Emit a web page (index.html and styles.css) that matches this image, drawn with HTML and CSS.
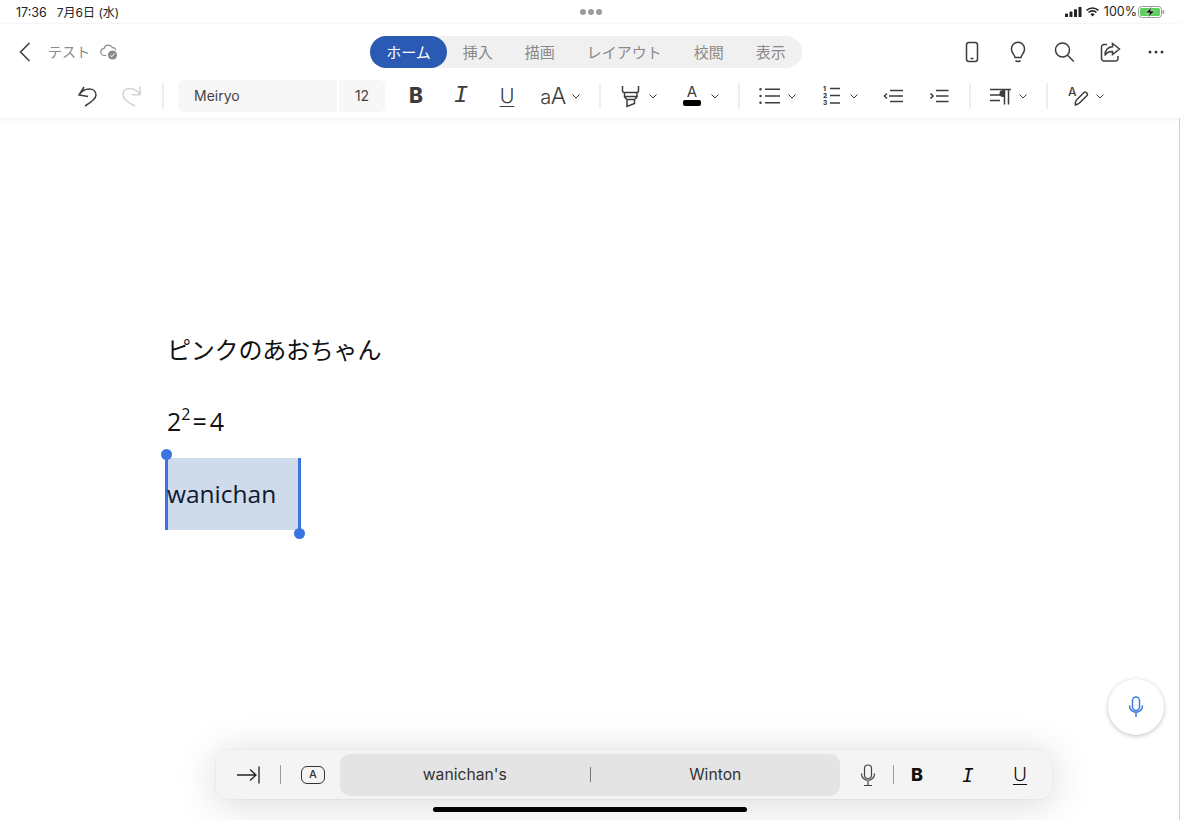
FILE: index.html
```html
<!DOCTYPE html>
<html lang="ja">
<head>
<meta charset="utf-8">
<title>テスト</title>
<link rel="stylesheet" href="styles.css">
</head>
<body>
<div class="screen">
  <div class="status">
    <div class="status-left"><span>17:36</span><span class="date">7月6日 (水)</span></div>
    <div class="status-dots"><i></i><i></i><i></i></div>
    <div class="status-right">
      <svg class="sig" width="17" height="10" viewBox="0 0 17 10"><rect x="0" y="6.500" width="3" height="3.500" rx=".6"/><rect x="4.500" y="4.500" width="3" height="5.500" rx=".6"/><rect x="9" y="2.200" width="3" height="7.800" rx=".6"/><rect x="13.500" y="0" width="3" height="10" rx=".6"/></svg>
      <svg class="wifi" width="13" height="10" viewBox="0 0 13 10"><path d="M.6 3.400a8.400 8.400 0 0 1 11.800 0M2.600 5.500a5.500 5.500 0 0 1 7.800 0" fill="none" stroke="#222" stroke-width="1.600"/><path d="M4.400 7.200a3 3 0 0 1 4.200 0L6.500 9.600z" fill="#222"/></svg>
      <span class="pct">100%</span>
      <svg class="batt" width="27" height="12" viewBox="0 0 27 12"><rect x=".5" y=".5" width="23" height="11" rx="3" fill="none" stroke="#9a9a9a"/><rect x="2" y="2" width="20" height="8" rx="1.600" fill="#5ed15c"/><rect x="24.600" y="4" width="1.600" height="4" rx=".8" fill="#9a9a9a"/><path d="M14 .8 7.500 7h4l-1.500 4.400L16.600 5h-4z" fill="#111" stroke="#fff" stroke-width=".5"/></svg>
    </div>
  </div>

  <header class="ribbon">
    <div class="title-row">
      <div class="doc-side">
        <svg class="back" width="12" height="20" viewBox="0 0 12 20"><path d="M10.500 1 1.500 10l9 9" fill="none" stroke="#3a3a3a" stroke-width="1.500"/></svg>
        <span class="doc-name">テスト</span>
        <svg class="cloud" width="19" height="18" viewBox="0 0 19 18"><path d="M6 12.500H4.400A3.400 3.400 0 0 1 4 5.700 4.400 4.400 0 0 1 12.300 4.600a3.200 3.200 0 0 1 3.400 2.600" fill="none" stroke="#8c8c8c" stroke-width="1.200"/><circle cx="12.500" cy="12" r="4.600" fill="#8c8c8c"/><path d="m10.400 12.400 1.500 1.300 2.700-3.200" fill="none" stroke="#fff" stroke-width="1"/></svg>
      </div>
      <nav class="tabs">
        <span class="tab active">ホーム</span>
        <span class="tab">挿入</span>
        <span class="tab">描画</span>
        <span class="tab">レイアウト</span>
        <span class="tab">校閲</span>
        <span class="tab">表示</span>
      </nav>
      <div class="actions">
        <svg class="ic" viewBox="0 0 24 24"><rect x="6.500" y="2.500" width="11" height="19" rx="2.500"/><path d="M10.500 18.500h3"/></svg>
        <svg class="ic" viewBox="0 0 24 24"><path d="M9 17.500c0-2.600-3.600-4.300-3.600-8.600a6.600 6.600 0 0 1 13.200 0c0 4.300-3.600 6-3.600 8.600zM9.500 20.500c1 1.300 4 1.300 5 0"/></svg>
        <svg class="ic" viewBox="0 0 24 24"><circle cx="10.500" cy="10" r="7"/><path d="m15.600 15.200 6.200 6.300"/></svg>
        <svg class="ic" viewBox="0 0 24 24"><path d="M9 4.500H6a2.500 2.500 0 0 0-2.500 2.500v11.500A2.500 2.500 0 0 0 6 21h11.500a2.500 2.500 0 0 0 2.500-2.500V16"/><path d="M14.500 3.500 21.500 9l-7 5.500V11.500c-3.500-.2-6 1.200-7.500 4 0-5.500 3-8.500 7.500-8.800z"/></svg>
        <svg class="ic dots" viewBox="0 0 24 24"><circle cx="6" cy="12" r="1.500"/><circle cx="12" cy="12" r="1.500"/><circle cx="18" cy="12" r="1.500"/></svg>
      </div>
    </div>

    <div class="tools">
      <svg class="ic" viewBox="0 0 24 24"><path d="M9 3 4 11l9 1.500M4 11C9 3 21 3 21 11c0 4-6 8-11 11"/></svg>
      <svg class="ic off nudge" viewBox="0 0 24 24"><path d="M20 2.500v8.200h-8.300M20 10.700C15 2 3 2.500 3 11c0 4 6 8 12 11"/></svg>
      <span class="sep sep-field"></span>
      <div class="font-fields">
        <span class="field font-name">Meiryo</span>
        <span class="field font-size">12</span>
      </div>
      <span class="glyph bold">B</span>
      <span class="glyph italic nudge">I</span>
      <span class="glyph under">U</span>
      <div class="tool"><span class="glyph size"><small>a</small>A</span><svg class="chev" viewBox="0 0 8 5"><path d="m.5.5 3.500 3.500L7.500.5"/></svg></div>
      <span class="sep"></span>
      <div class="tool">
        <svg class="ic" viewBox="0 0 24 24"><path d="M4.500 2v5c0 1 .5 1.500 1.500 1.500h13c1 0 1.500-.5 1.500-1.500V2M6.500 8.500V13l2.500 2.500h7.500L19 13V8.500M6.500 12.500H19M9 15.500v7l7.500-3v-4"/></svg>
        <svg class="chev" viewBox="0 0 8 5"><path d="m.5.5 3.500 3.500L7.500.5"/></svg>
      </div>
      <div class="tool">
        <span class="color-a"><span>A</span><i></i></span>
        <svg class="chev" viewBox="0 0 8 5"><path d="m.5.5 3.500 3.500L7.500.5"/></svg>
      </div>
      <span class="sep"></span>
      <div class="tool">
        <svg class="ic" viewBox="0 0 24 24"><path d="M8 5.300h15M8 12h15M8 18.700h15"/><circle class="fill" cx="3.500" cy="5.300" r="1.200"/><circle class="fill" cx="3.500" cy="12" r="1.200"/><circle class="fill" cx="3.500" cy="18.700" r="1.200"/></svg>
        <svg class="chev" viewBox="0 0 8 5"><path d="m.5.5 3.500 3.500L7.500.5"/></svg>
      </div>
      <div class="tool">
        <svg class="ic" viewBox="0 0 24 24"><path d="M11 4.500h10M11 11.500h10M11 19h10"/><text class="num" x="4" y="7">1</text><text class="num" x="4" y="14">2</text><text class="num" x="4" y="21">3</text></svg>
        <svg class="chev" viewBox="0 0 8 5"><path d="m.5.5 3.500 3.500L7.500.5"/></svg>
      </div>
      <svg class="ic" viewBox="0 0 24 24"><path d="M6 9.500 3.500 12 6 14.500M9 6.500h13M8 12h14M9 17.500h13"/></svg>
      <svg class="ic" viewBox="0 0 24 24"><path d="M3.500 9.500 6 12l-2.500 2.500M9 6.500h12.500M9 12h12.500M9 17.500h12.500"/></svg>
      <span class="sep"></span>
      <div class="tool">
        <svg class="ic" viewBox="0 0 24 24"><path d="M2 5.500h21M2 11h10M2 16.500h10M16.500 5.500V20.500M20.500 5.500V20.500"/><path class="fill" d="M16.500 6h-1.500a3.500 3.500 0 0 0 0 7h1.500z"/></svg>
        <svg class="chev" viewBox="0 0 8 5"><path d="m.5.5 3.500 3.500L7.500.5"/></svg>
      </div>
      <span class="sep"></span>
      <div class="tool">
        <svg class="ic" viewBox="0 0 24 24"><text class="pen-a" x="3" y="12">A</text><path d="M10.500 21c-.5-2 0-4 1.500-5.500L19 8.500c1.500-1.500 4.500 1 3 3l-7 7c-1.300 1.300-3 2-4.500 2.500z"/></svg>
        <svg class="chev" viewBox="0 0 8 5"><path d="m.5.5 3.500 3.500L7.500.5"/></svg>
      </div>
    </div>
  </header>

  <main class="page">
    <p class="line kana">ピンクのあおちゃん</p>
    <p class="line math">2<sup>2</sup><span class="eq">=4</span></p>
    <p class="line"><span class="selection">wanichan<i class="handle start"></i><i class="handle end"></i></span></p>
  </main>

  <button class="fab" type="button">
    <svg width="24" height="24" viewBox="0 0 24 24"><rect x="8.500" y="2" width="7" height="13.500" rx="3.500"/><path d="M5.500 10.500c0 9 13 9 13 0M12 18v4"/></svg>
  </button>

  <div class="kb-bar">
    <svg class="ic key-tab" viewBox="0 0 24 24"><path d="M1 12h19M14 6.500l6 5.500-6 5.500M23 3.500v17"/></svg>
    <span class="kb-sep"></span>
    <span class="key-a">A</span>
    <div class="suggest">
      <span>wanichan's</span>
      <i></i>
      <span>Winton</span>
    </div>
    <svg class="ic kb-mic" viewBox="0 0 24 24"><rect x="8.500" y="2" width="7" height="13.500" rx="3.500"/><path d="M5.500 10.500c0 9 13 9 13 0M12 18v4M8 22.500h8"/></svg>
    <span class="kb-sep dark"></span>
    <span class="kb-b">B</span>
    <span class="kb-i">I</span>
    <span class="kb-u">U</span>
  </div>

  <div class="home-bar"></div>
</div>
</body>
</html>
```
FILE: styles.css
```css
* { box-sizing: border-box; }
html, body { margin: 0; height: 100%; background: #fff; }
body { font-family: Inter, "Noto Sans CJK JP", sans-serif; color: #222; overflow: hidden; }
.screen { position: relative; width: 1180px; height: 820px; display: flex; flex-direction: column; overflow: hidden; background: #fff; }

/* status bar */
.status { height: 24px; flex: none; display: grid; grid-template-columns: 1fr auto 1fr; align-items: center; padding: 1px 15px 0 16px; background: #fff; border-bottom: 1px solid #fafafa; font: 12.500px/16px Inter, "Noto Sans CJK JP", sans-serif; color: #222; }
.status-left { display: flex; gap: 10px; align-items: center; padding-top: 2px; }
.date { font-size: 12px; }
.status-dots { display: flex; gap: 2px; }
.status-dots i { width: 6px; height: 6px; border-radius: 50%; background: #9b9b9b; }
.status-right { display: flex; align-items: center; justify-content: flex-end; }
.sig { fill: #222; margin-right: 4px; }
.wifi { margin-right: 5px; }
.pct { margin-right: 1px; }

/* ribbon */
.ribbon { flex: none; height: 94px; background: #fff; box-shadow: 0 1px 4px rgba(0,0,0,.07); position: relative; z-index: 1; }
.title-row { display: grid; grid-template-columns: 1fr auto 1fr; align-items: center; padding: 12px 12px 0 4px; height: 44px; }
.doc-side { display: flex; align-items: center; }
.back { margin-left: 15px; }
.doc-name { margin: 0 0 2px 17px; font: 14px "Noto Sans CJK JP", sans-serif; color: #8a8a8a; }
.cloud { margin-left: 10px; }
.tabs { display: flex; height: 32px; border-radius: 16px; background: #f0f0f0; font: 15px/31px "Noto Sans CJK JP", sans-serif; color: #8a8a8a; }
.tab { padding: 0 16px; }
.tab.active { background: #2b5ab4; color: #fff; border-radius: 16px; }
.actions { display: flex; justify-content: flex-end; gap: 22px; }

.ic { width: 24px; height: 24px; flex: none; fill: none; stroke: #3c3c3c; stroke-width: 1.500; }
.ic.off { stroke: #d2d2d2; }
.ic .fill { fill: #3c3c3c; stroke: none; }
.ic.dots { fill: #3c3c3c; stroke: none; }
.ic .num { font: 800 6.500px Inter, sans-serif; fill: #3c3c3c; stroke: none; }
.ic .pen-a { font: 500 12px Inter, sans-serif; fill: #3c3c3c; stroke: none; }

.tools { display: flex; align-items: center; height: 32px; margin-top: 12px; padding-left: 75px; gap: 22px; }
.nudge { margin-left: -1px; }
.sep { width: 2px; height: 26px; flex: none; background: #eeeeee; margin: 0 -5px 0 -4px; }
.sep-field { margin-right: -8px; }
.font-fields { display: flex; gap: 2px; height: 32px; margin-right: -3px; }
.field { background: #f7f7f7; font: 14px/32px Inter, sans-serif; color: #444; }
.font-name { width: 159px; padding-left: 16px; border-radius: 6px 0 0 6px; }
.font-size { width: 46px; text-align: center; border-radius: 0 6px 6px 0; }
.tool { display: flex; align-items: center; gap: 7px; flex: none; }
.chev { width: 8px; height: 5px; margin-right: 1px; fill: none; stroke: #3c3c3c; stroke-width: 1; }
.glyph { width: 24px; flex: none; text-align: center; color: #3c3c3c; line-height: 24px; }
.bold { font: 800 21px/24px Inter, sans-serif; }
.italic { font: italic 24px/24px "Liberation Mono", monospace; }
.under { font: 300 20px/22px Inter, sans-serif; text-decoration: underline; text-underline-offset: 3px; text-decoration-thickness: 1px; }
.size { font: 300 23px/24px Inter, sans-serif; letter-spacing: -.5px; white-space: nowrap; display: flex; justify-content: center; align-items: baseline; }
.size small { font-size: 20px; }
.color-a { width: 24px; height: 24px; padding-top: 1px; display: flex; flex-direction: column; align-items: center; font: 15px/14px Inter, sans-serif; color: #3c3c3c; }
.color-a i { width: 18px; height: 6px; margin-top: 1px; background: #000; border-radius: 2px; }

/* document */
.page { flex: 1; padding: 195px 0 0 167px; border-right: 1px solid #cfcfcf; }
.line { margin: 0; height: 72px; font: 24px/72px "Noto Sans CJK JP", sans-serif; color: #111; }
.kana { letter-spacing: -.2px; }
.math { font: 25px/72px "Open Sans", sans-serif; }
.line sup { font-size: 16px; line-height: 0; vertical-align: 11px; }
.eq { margin-left: 2px; letter-spacing: 3px; }
.selection { position: relative; display: inline-block; width: 136px; height: 72px; margin-left: -2px; text-indent: -1px; background: #cfdbeb; border-left: 3px solid #3a74e0; border-right: 3px solid #3a74e0; font-family: "Open Sans", sans-serif; font-size: 24.500px; color: #0d1a30; }
.handle { position: absolute; width: 11px; height: 11px; border-radius: 50%; background: #3a74e0; }
.handle.start { left: -7px; top: -9px; }
.handle.end { right: -7px; bottom: -9px; }

/* floating */
.fab { position: absolute; left: 1108px; top: 679px; width: 56px; height: 56px; padding: 0; border: 0; border-radius: 50%; background: #fff; box-shadow: 0 1px 4px rgba(0,0,0,.25); display: flex; align-items: center; justify-content: center; }
.fab svg { fill: none; stroke: #3f7bdc; stroke-width: 1.500; }
.kb-bar { position: absolute; left: 216px; top: 750px; width: 836px; height: 49px; padding-left: 20px; display: flex; align-items: center; background: #f4f4f4; border-radius: 12px; box-shadow: 0 0 0 1px rgba(0,0,0,.025), 0 4px 40px rgba(0,0,0,.16); }
.key-tab { stroke: #222; stroke-width: 1.300; }
.kb-sep { width: 1px; height: 19px; margin-left: 20px; background: #9a9a9a; flex: none; }
.kb-sep.dark { height: 19px; margin-left: 13px; }
.key-a { width: 24px; height: 18px; margin-left: 20px; border: 1.300px solid #333; border-radius: 6px; font: 500 11px/15px Inter, sans-serif; text-align: center; color: #333; flex: none; }
.suggest { width: 500px; height: 42px; margin-left: 15px; border-radius: 10px; background: #e4e4e4; display: grid; grid-template-columns: 1fr 1px 1fr; align-items: center; text-align: center; font: 15.700px Inter, sans-serif; color: #333; flex: none; }
.suggest i { height: 15px; width: 1px; background: #777; }
.kb-mic { margin-left: 16px; stroke: #444; stroke-width: 1.200; }
.kb-b { width: 24px; margin-left: 11px; text-align: center; font: 800 18px Inter, sans-serif; color: #111; }
.kb-i { width: 24px; margin-left: 27px; text-align: center; font: oblique 19px "DejaVu Sans Mono", monospace; color: #111; }
.kb-u { width: 24px; margin-left: 28px; text-align: center; font: 300 19px Inter, sans-serif; color: #111; text-decoration: underline; text-underline-offset: 3px; text-decoration-thickness: 1px; }
.home-bar { position: absolute; left: 433px; top: 807px; width: 314px; height: 5px; border-radius: 3px; background: #000; }
```
